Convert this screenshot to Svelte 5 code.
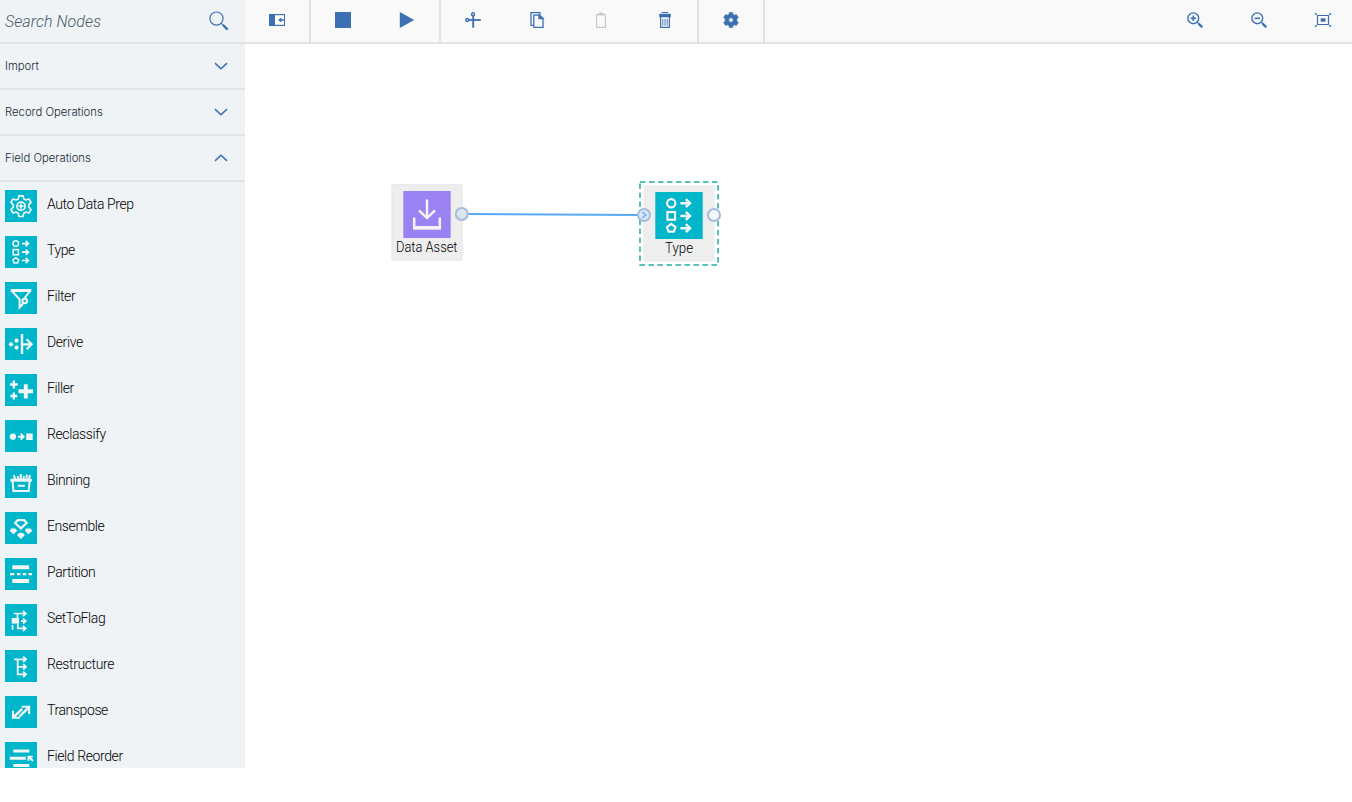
<script>
  const categories = [
    { name: 'Import', open: false },
    { name: 'Record Operations', open: false },
    { name: 'Field Operations', open: true }
  ];
  const nodes = [
    'Auto Data Prep', 'Type', 'Filter', 'Derive', 'Filler', 'Reclassify', 'Binning',
    'Ensemble', 'Partition', 'SetToFlag', 'Restructure', 'Transpose', 'Field Reorder'
  ];
</script>

{#snippet typeGlyph()}
  <g fill="none" stroke="#f3f5f7" stroke-width="1.5">
    <circle cx="10.8" cy="7.6" r="2.8" />
    <rect x="8.2" y="13.6" width="5.2" height="5.2" />
    <path d="M10.8 21.6l2.9 2.2-1.1 3.1H9l-1.1-3.1z" />
    <path stroke-width="1.7" d="M17 7.6h6.4M20.7 4.9l2.8 2.7-2.8 2.7M17 16.2h6.4M20.7 13.5l2.8 2.7-2.8 2.7M17 24.5h6.4M20.7 21.8l2.8 2.7-2.8 2.7" />
  </g>
{/snippet}

{#snippet glyph(name)}
  <svg class="tile" width="32" height="32" viewBox="0 0 32 32">
    <g fill="none" stroke="#f3f5f7" stroke-width="1.7">
      {#if name === 'Auto Data Prep'}
        <path stroke-linejoin="round" d="M14 5.8h4l.8 3.1 2.1 1.1 3.1-1 2 3.4-2.3 2.5v2.2l2.3 2.4-2 3.5-3.1-1-2.1 1.2-.8 3.3h-4l-.8-3.3-2.1-1.2-3.1 1-2-3.5 2.3-2.4v-2.2L6 12.4 8 9l3.1 1 2.1-1.1z" />
        <circle cx="16" cy="16.2" r="4.1" />
        <path d="M16 13.7v5M13.5 16.2h5" />
      {:else if name === 'Type'}
        {@render typeGlyph()}
      {:else if name === 'Filter'}
        <path stroke-width="2" d="M6.5 8.7h19M7 9l7.6 8.4v8l3.2-3.4M25 9.2l-5.4 6.8" />
        <path stroke-width="2.8" d="M5.7 8.4h20.6" />
        <circle cx="19.7" cy="19" r="2.3" stroke-width="2" />
        <path d="M18.3 21l-3.3 4.2" />
      {:else if name === 'Derive'}
        <path stroke-width="2.4" d="M17 6v20" />
        <path stroke-width="2.2" d="M17 16.3h10M21.6 11.3l5 5-5 5" />
        <g fill="#f3f5f7" stroke="none">
          <circle cx="6" cy="16.3" r="2.1" /><circle cx="11.5" cy="12.7" r="2.1" /><circle cx="11.5" cy="19.6" r="2.1" />
        </g>
      {:else if name === 'Filler'}
        <path stroke-width="2.3" d="M8.8 6.6v7.8M4.9 10.5h7.8M8.8 18.4v7M5.4 22h6.8" />
        <path stroke-width="3.9" d="M20.8 10.2v14.2M13.5 17.3h14.6" />
      {:else if name === 'Reclassify'}
        <circle cx="7.9" cy="16.7" r="3.1" fill="#f3f5f7" stroke="none" />
        <path fill="#f3f5f7" stroke="none" d="M21.2 13.5h6.5V20h-6.5z" />
        <path stroke-width="1.9" d="M13 16.7h5.6M15.7 13.7l3 3-3 3" />
      {:else if name === 'Binning'}
        <path stroke-width="3" d="M5.4 14.2h21.4" />
        <path stroke-width="2" d="M7.5 14l1 11h15.2l1-11" />
        <path stroke-width="2" d="M9 9l1 4.5M12.6 10l.6 3M15.8 8v5.5M18.9 10l-.4 3M21.9 8.6l-.4 4M25 9l-1.2 4.5" />
        <path stroke-width="2" d="M12.8 19.8h7" />
      {:else if name === 'Ensemble'}
        <path stroke-width="2.2" d="M12.7 8.1h6.4l2.6 2.9-5.8 5.4-5.8-5.4z" />
        <g fill="#f3f5f7" stroke="none">
          <path d="M6.2 16.5h4.2l1.8 2.3-3.8 3.5-3.7-3.5zM21.3 16.5h4.2l1.8 2.3-3.8 3.5-3.7-3.5zM13.8 21h4.2l1.8 2.3-3.9 3.6-3.8-3.6z" />
        </g>
      {:else if name === 'Partition'}
        <path stroke-width="4" d="M7.3 9.2h16.8M7.3 23h16.8" />
        <path stroke-width="2.3" d="M5 16.2h4.4M12 16.2h3.4M17.8 16.2h3.4M23.6 16.2H27" />
      {:else if name === 'SetToFlag'}
        <path fill="#f3f5f7" stroke="none" d="M6.7 14h7.3v5.6H6.7z" />
        <path d="M8.6 9.5h12M12.5 9.5V14M16 17.1h4.6M12.8 19.4v5h7.8M18 6.9l2.8 2.6-2.8 2.6M18 14.5l2.8 2.6-2.8 2.6M18 21.8l2.8 2.6-2.8 2.6M7.5 21v4.8" />
      {:else if name === 'Restructure'}
        <path stroke-width="1.8" d="M9 9.3h12M12.7 9.3v15h8.3M12.7 16.8h8.3M18.2 6.6l2.8 2.7-2.8 2.7M18.2 14.1l2.8 2.7-2.8 2.7M18.2 21.6l2.8 2.7-2.8 2.7" />
      {:else if name === 'Transpose'}
        <path stroke-width="2.4" d="M8.6 21.2l8.6-8.4M14.6 20.4l9.2-9.1" />
        <path stroke-width="2.1" d="M16.8 10.8h7.3v7.1M15 21.8H8v-7" />
      {:else}
        <path stroke-width="3" d="M8.3 9h16M4.8 16.3h16M8.3 23.6h16" />
        <path stroke-width="1.9" d="M23.4 18.8v-4.2h4.4M24 15l4 4" />
      {/if}
    </g>
  </svg>
{/snippet}

<div class="app">
  <aside>
    <div class="search">
      <span>Search Nodes</span>
      <svg width="20" height="20" viewBox="0 0 20 20" fill="none" stroke="#3d70b2">
        <circle cx="7.5" cy="7.6" r="6.6" stroke-width="1.2" />
        <path d="M12.3 12.4l2 2" stroke-width="1.1" />
        <path d="M14 14l4.6 4.6" stroke-width="2.4" />
      </svg>
    </div>
    {#each categories as c}
      <div class="category">
        <span>{c.name}</span>
        <svg width="14" height="8" viewBox="0 0 14 8" fill="none" stroke="#3d70b2" stroke-width="1.5">
          <path d={c.open ? 'M1 6.9l6-5.7 6 5.7' : 'M1 1.1l6 5.7 6-5.7'} />
        </svg>
      </div>
    {/each}
    <ul>
      {#each nodes as n}
        <li>{@render glyph(n)}<span>{n}</span></li>
      {/each}
    </ul>
  </aside>

  <main>
    <div class="toolbar">
      <div class="group">
        <div class="tool">
          <svg width="16" height="16" viewBox="0 0 16 16"><path fill="#3d70b2" d="M0 2h16v12H0z" /><path fill="#fff" d="M6 3.2h9v9.6H6z" /><path fill="#3d70b2" d="M15 7.3h-2.6V5.6L9 8l3.4 2.4V8.7H15z" /></svg>
        </div>
      </div>
      <div class="group">
        <div class="tool"><svg width="16" height="16" viewBox="0 0 16 16"><path fill="#3d70b2" d="M0 0h16v16H0z" /></svg></div>
        <div class="tool"><svg width="16" height="16" viewBox="0 0 16 16"><path fill="#3d70b2" d="M.8 0L15.2 8 .8 16z" /></svg></div>
      </div>
      <div class="group">
        <div class="tool">
          <svg width="16" height="16" viewBox="0 0 16 16" fill="none" stroke="#3d70b2">
            <circle cx="8" cy="2.2" r="1.5" stroke-width="1.4" /><circle cx="2.2" cy="8" r="1.5" stroke-width="1.4" />
            <path d="M3.7 8H15.8" stroke-width="1.8" /><path d="M8.2 3.7v12" stroke-width="1.9" />
          </svg>
        </div>
        <div class="tool">
          <svg width="16" height="16" viewBox="0 0 16 16" fill="none" stroke="#3d70b2" stroke-width="1.3">
            <path d="M4.4 13.4H2V.7h9v2" /><path d="M4.8 3.2h5.7L14 6.5v8.9H4.8z" /><path fill="#3d70b2" d="M10 3.2v3.5h4z" />
          </svg>
        </div>
        <div class="tool">
          <svg width="16" height="16" viewBox="0 0 16 16" fill="none" stroke="#c9c9c9" stroke-width="1.2">
            <path d="M3.6 2.5h8.8v12.9H3.6z" /><path fill="#d4d4d4" d="M5.6 1.8h1.3C7.3.5 8.7.5 9.1 1.8h1.3v1.2H5.6z" />
          </svg>
        </div>
        <div class="tool">
          <svg width="16" height="16" viewBox="0 0 16 16" fill="none" stroke="#3d70b2">
            <path d="M4.7.5h6.6" stroke-width="1" /><path fill="#3d70b2" stroke="none" d="M2.2 1.8h11.6v3.5H2.2z" />
            <path d="M3.6 5v10.4h8.8V5" stroke-width="1.2" /><path d="M5.8 7v6.7M8 7v6.7M10.2 7v6.7" stroke-width=".9" />
          </svg>
        </div>
      </div>
      <div class="group">
        <div class="tool">
          <svg width="16" height="16" viewBox="0 0 16 16">
            <path fill="#3d70b2" stroke="#3d70b2" stroke-linejoin="round" stroke-width=".7" fill-rule="evenodd" d="M6.5.4h3l.5 2 1.4.8 2-.6 1.9 2.8-1.5 1.5v2.2l1.5 1.5-1.9 2.8-2-.6-1.4.8-.5 2h-3l-.5-2-1.4-.8-2 .6L.7 10.6l1.5-1.5V6.9L.7 5.4l1.9-2.8 2 .6L6 2.4zM8 5.7a2.3 2.3 0 100 4.6 2.3 2.3 0 000-4.6z" />
          </svg>
        </div>
      </div>
      <div class="zoom">
        {#each ['M6.3 3.6v5.4M3.6 6.3H9', 'M3.6 6.3H9'] as d}
          <div class="tool">
            <svg width="16" height="16" viewBox="0 0 16 16" fill="none" stroke="#3d70b2">
              <circle cx="6.3" cy="6.3" r="5.4" stroke-width="1.4" /><path {d} stroke-width="1.6" />
              <path d="M10.2 10.2l1.5 1.5" stroke-width="1.3" /><path d="M11.6 11.6l3.6 3.6" stroke-width="2.3" />
            </svg>
          </div>
        {/each}
        <div class="tool">
          <svg width="16" height="16" viewBox="0 0 16 16" fill="none" stroke="#3d70b2" stroke-width="1.2">
            <path d="M2.5 3.5h11v9h-11z" /><path d="M0 1.3l1.6 1.3M16 1.3l-1.6 1.3M0 14.7l1.6-1.3M16 14.7l-1.6-1.3" stroke-width="1.7" /><path fill="#3d70b2" stroke="none" d="M5.7 6.3h4.8v3.4H5.7z" />
          </svg>
        </div>
      </div>
    </div>

    <svg class="canvas" width="1107" height="758" viewBox="245 44 1107 758">
      <rect x="392" y="184.8" width="70" height="75.4" fill="#eee" stroke="#e5e5e5" />
      <rect x="403.3" y="191" width="47.4" height="47" fill="#9b82f3" />
      <g fill="none" stroke="#f3f3f6" stroke-width="2.5">
        <path d="M427 199.5v18M419 210.3l8 7.8 8-7.8M414.2 217.6v10.6h25.6v-10.6" />
        <path stroke-width="3.4" d="M413 227.7h28" />
      </g>
      <text x="396" y="252" textLength="61.5" lengthAdjust="spacingAndGlyphs">Data Asset</text>

      <rect x="640" y="182" width="78" height="83" fill="#fff" stroke="#5ac1b7" stroke-width="2" stroke-dasharray="5.5 3.5" />
      <rect x="644" y="186" width="70" height="75" fill="#eee" stroke="#ebebeb" />
      <rect x="655.3" y="192" width="47.4" height="47" fill="#00b6cb" />
      <g transform="translate(655.3 192) scale(1.475)">{@render typeGlyph()}</g>
      <text x="665" y="253" textLength="28" lengthAdjust="spacingAndGlyphs">Type</text>

      <path d="M468 214L638 215" stroke="#5aaafa" stroke-width="2" />
      <g stroke="#a4bbde" stroke-width="2">
        <circle cx="461.8" cy="214" r="6" fill="#dde6ee" />
        <circle cx="644" cy="215" r="6" fill="#dde6ee" />
        <circle cx="714" cy="215" r="6" fill="#f4f7fb" />
      </g>
      <path d="M642.3 212l3.6 3-3.6 3" fill="none" stroke="#5aaafa" stroke-width="1.2" />
    </svg>
  </main>
</div>

<style>
  :global(body) { margin: 0; background: #fff; }
  .app {
    display: flex;
    width: 1352px;
    height: 802px;
    overflow: hidden;
    font-family: Roboto, "Liberation Sans", sans-serif;
    color: #000;
  }
  svg { display: block; flex: none; }
  aside {
    display: flex;
    flex-direction: column;
    flex: none;
    width: 245px;
    height: 768px;
    overflow: hidden;
    background: #eff3f6;
  }
  .search, .category {
    display: flex;
    flex: none;
    align-items: center;
    justify-content: space-between;
    box-sizing: border-box;
    border-bottom: 2px solid #dfe3e6;
  }
  .search {
    height: 44px;
    padding: 0 16px 1px 5px;
    font-size: 16px;
    font-style: italic;
    font-weight: 350;
    letter-spacing: 0.07px;
    color: #4c5a64;
  }
  .search span { padding-top: 1px; }
  .category {
    height: 46px;
    padding: 0 17px 0 5px;
    font-family: Inter, Roboto, sans-serif;
    font-size: 11.3px;
    font-weight: 350;
    letter-spacing: 0;
    color: #152935;
  }
  ul { margin: 0; padding: 8px 0 0 5px; list-style: none; }
  li { display: flex; gap: 10px; height: 46px; font-size: 14px; font-weight: 350; letter-spacing: -0.4px; line-height: 29px; }
  .tile { background: #00b6cb; }
  main { display: flex; flex-direction: column; flex: 1; min-width: 0; }
  .toolbar {
    display: flex;
    flex: none;
    box-sizing: border-box;
    height: 44px;
    overflow: hidden;
    background: #f9f9f9;
    border-bottom: 2px solid #dfe3e6;
  }
  .group { display: flex; border-right: 2px solid #dfe3e6; }
  .tool { display: flex; justify-content: center; width: 64px; padding-top: 12px; }
  .zoom { display: flex; margin: 0 -3px 0 auto; }
  .canvas { overflow: hidden; }
  text { font-size: 14px; font-weight: 350; fill: #000; }
</style>
